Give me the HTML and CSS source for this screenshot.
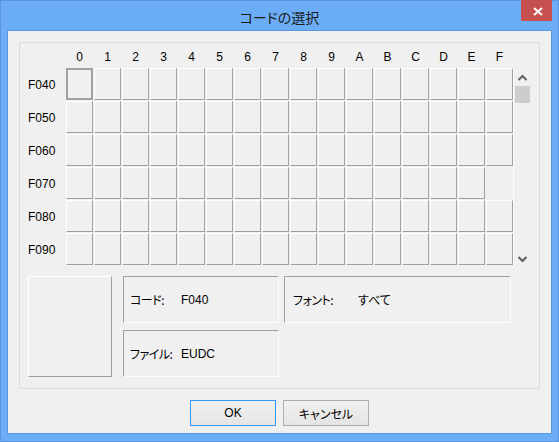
FILE: index.html
```html
<!DOCTYPE html>
<html lang="ja">
<head>
<meta charset="utf-8">
<title>コードの選択</title>
<link rel="stylesheet" href="styles.css">
</head>
<body>
<div class="window">
  <div class="titlebar">
    <span class="title jp">コードの選択</span>
    <span class="close">
      <svg width="10" height="9" viewBox="0 0 10 9"><path d="M1 1 L9 8 M9 1 L1 8" stroke="#fff" stroke-width="2" fill="none"/></svg>
    </span>
  </div>
  <div class="client">
    <div class="panel">
      <div class="table">
        <div></div>
        <div class="colhead">0</div><div class="colhead">1</div><div class="colhead">2</div><div class="colhead">3</div>
        <div class="colhead">4</div><div class="colhead">5</div><div class="colhead">6</div><div class="colhead">7</div>
        <div class="colhead">8</div><div class="colhead">9</div><div class="colhead">A</div><div class="colhead">B</div>
        <div class="colhead">C</div><div class="colhead">D</div><div class="colhead">E</div><div class="colhead">F</div>
        <div></div>

        <div class="rowhead">F040</div>
        <div class="cell sel"></div><div class="cell"></div><div class="cell"></div><div class="cell"></div>
        <div class="cell"></div><div class="cell"></div><div class="cell"></div><div class="cell"></div>
        <div class="cell"></div><div class="cell"></div><div class="cell"></div><div class="cell"></div>
        <div class="cell"></div><div class="cell"></div><div class="cell"></div><div class="cell"></div>
        <div class="scroll">
          <div class="sb-btn"><svg width="17" height="17" viewBox="0 0 17 17"><polyline points="4.5,12 8.5,8 12.5,12" fill="none" stroke="#606060" stroke-width="2"/></svg></div>
          <div class="thumb"></div>
          <div class="sb-btn down"><svg width="17" height="17" viewBox="0 0 17 17"><polyline points="4.5,9 8.5,13 12.5,9" fill="none" stroke="#606060" stroke-width="2"/></svg></div>
        </div>

        <div class="rowhead">F050</div>
        <div class="cell"></div><div class="cell"></div><div class="cell"></div><div class="cell"></div>
        <div class="cell"></div><div class="cell"></div><div class="cell"></div><div class="cell"></div>
        <div class="cell"></div><div class="cell"></div><div class="cell"></div><div class="cell"></div>
        <div class="cell"></div><div class="cell"></div><div class="cell"></div><div class="cell"></div>

        <div class="rowhead">F060</div>
        <div class="cell"></div><div class="cell"></div><div class="cell"></div><div class="cell"></div>
        <div class="cell"></div><div class="cell"></div><div class="cell"></div><div class="cell"></div>
        <div class="cell"></div><div class="cell"></div><div class="cell"></div><div class="cell"></div>
        <div class="cell"></div><div class="cell"></div><div class="cell"></div><div class="cell"></div>

        <div class="rowhead">F070</div>
        <div class="cell"></div><div class="cell"></div><div class="cell"></div><div class="cell"></div>
        <div class="cell"></div><div class="cell"></div><div class="cell"></div><div class="cell"></div>
        <div class="cell"></div><div class="cell"></div><div class="cell"></div><div class="cell"></div>
        <div class="cell"></div><div class="cell"></div><div class="cell"></div><div class="cell blank"></div>

        <div class="rowhead">F080</div>
        <div class="cell"></div><div class="cell"></div><div class="cell"></div><div class="cell"></div>
        <div class="cell"></div><div class="cell"></div><div class="cell"></div><div class="cell"></div>
        <div class="cell"></div><div class="cell"></div><div class="cell"></div><div class="cell"></div>
        <div class="cell"></div><div class="cell"></div><div class="cell"></div><div class="cell"></div>

        <div class="rowhead">F090</div>
        <div class="cell"></div><div class="cell"></div><div class="cell"></div><div class="cell"></div>
        <div class="cell"></div><div class="cell"></div><div class="cell"></div><div class="cell"></div>
        <div class="cell"></div><div class="cell"></div><div class="cell"></div><div class="cell"></div>
        <div class="cell"></div><div class="cell"></div><div class="cell"></div><div class="cell"></div>
      </div>

      <div class="info">
        <div class="preview"></div>
        <div class="field code"><span class="label jp">コード:</span><span>F040</span></div>
        <div class="field font"><span class="label jp">フォント:</span><span class="jp">すべて</span></div>
        <div class="field file"><span class="label jp">ファイル:</span><span>EUDC</span></div>
      </div>
    </div>
    <div class="buttons">
      <div class="btn default">OK</div>
      <div class="btn jp">キャンセル</div>
    </div>
  </div>
</div>
</body>
</html>
```
FILE: styles.css
```css
html, body {
  margin: 0;
  padding: 0;
}
body {
  background: #6badf6;
  font-family: "Liberation Sans", "Noto Sans CJK JP", sans-serif;
  font-size: 12px;
  color: #000;
}
.jp {
  font-family: "Noto Sans CJK JP", sans-serif;
  font-feature-settings: "palt";
}
.window {
  width: 559px;
  height: 442px;
  box-sizing: border-box;
  border: 1px solid #5a97e0;
  background: #6badf6;
  padding: 0 6px 7px;
  display: flex;
  flex-direction: column;
}
.titlebar {
  height: 29px;
  flex: none;
  display: grid;
  grid-template-columns: 1fr auto 1fr;
  align-items: start;
}
.title {
  grid-column: 2;
  font-size: 14px;
  line-height: 20px;
  padding-top: 6px;
  color: #1a1a1a;
  white-space: nowrap;
}
.close {
  grid-column: 3;
  justify-self: end;
  width: 31px;
  height: 21px;
  margin-top: -1px;
  background: #c75050;
  display: flex;
  align-items: center;
  justify-content: center;
  box-sizing: border-box;
  padding: 2px 0 0 2px;
}
.close svg { display: block; }
.client {
  flex: 1;
  border: 1px solid #5a97e0;
  background: #f0f0f0;
  display: flex;
  flex-direction: column;
}
.panel {
  margin: 11px 11px 0;
  height: 347px;
  box-sizing: border-box;
  border: 1px solid #dcdcdc;
  padding: 0 0 0 8px;
}
.table {
  display: grid;
  grid-template-columns: 37px repeat(16, 27px) 17px;
  grid-template-rows: 24px repeat(6, 32px);
  gap: 1px;
}
.colhead {
  text-align: center;
  line-height: 20px;
  padding-top: 4px;
}
.rowhead {
  line-height: 32px;
  padding-top: 1px;
}
.cell {
  box-sizing: border-box;
  border: 1px solid;
  border-color: #fff #a0a0a0 #a0a0a0 #fff;
}
.cell.sel {
  border: 2px solid #a0a0a0;
}
.cell.blank {
  border-color: transparent;
}
.scroll {
  grid-column: 18;
  grid-row: 2 / span 6;
  margin-left: -1px;
  border-left: 1px solid #fff;
  display: flex;
  flex-direction: column;
}
.sb-btn {
  height: 17px;
}
.sb-btn svg { display: block; }
.sb-btn.down {
  margin-top: auto;
}
.thumb {
  width: 15px;
  height: 17px;
  margin: 1px 0 0 1px;
  background: #cdcdcd;
}
.info {
  display: grid;
  grid-template-columns: 90px 156px 227px;
  grid-template-rows: 47px 47px;
  column-gap: 5px;
  row-gap: 7px;
  margin-top: 11px;
}
.preview {
  grid-row: 1 / span 2;
  width: 84px;
  box-sizing: border-box;
  border: 1px solid;
  border-color: #fff #a0a0a0 #a0a0a0 #fff;
}
.field {
  box-sizing: border-box;
  border: 1px solid;
  border-color: #a0a0a0 #fff #fff #a0a0a0;
  display: flex;
  align-items: center;
  padding-left: 6px;
}
.field .label {
  width: 51px;
  flex: none;
  letter-spacing: -0.5px;
}
.field.font {
  padding-left: 8px;
}
.field.font .label {
  width: 65px;
}
.field.file {
  grid-column: 2;
  grid-row: 2;
}
.buttons {
  display: flex;
  justify-content: center;
  gap: 7px;
  margin-top: 11px;
}
.btn {
  width: 86px;
  height: 26px;
  box-sizing: border-box;
  border: 1px solid #acacac;
  background: linear-gradient(#f0f0f0, #e5e5e5);
  display: flex;
  align-items: center;
  justify-content: center;
  font-size: 12px;
}
.btn.default {
  border-color: #3399ff;
}
```
